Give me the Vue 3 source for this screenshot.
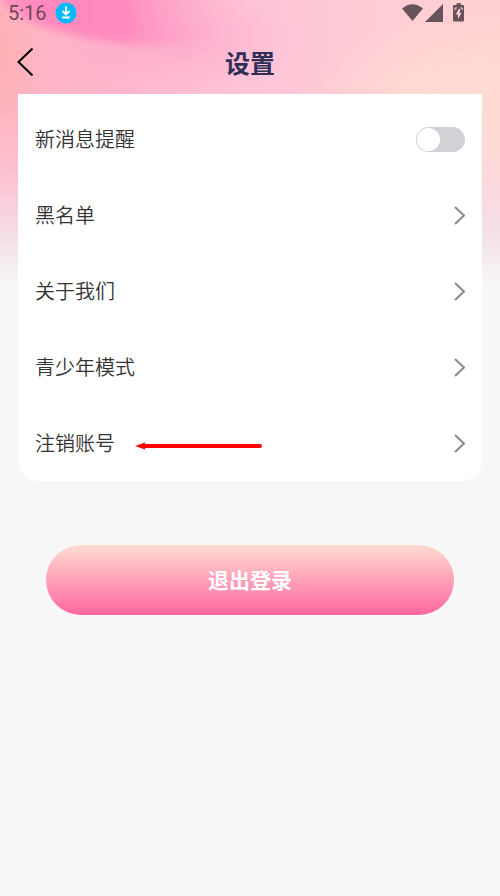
<script setup>
import { ref } from 'vue'

const notify = ref(false)
const links = ['黑名单', '关于我们', '青少年模式', '注销账号']
</script>

<template>
  <div class="screen">
    <svg class="backdrop" viewBox="0 0 500 300" preserveAspectRatio="none" aria-hidden="true">
      <defs>
        <linearGradient id="base" x1="0" y1="0" x2="1" y2="0">
          <stop offset="0" stop-color="#ffb5c4" />
          <stop offset="0.2" stop-color="#fdb5ca" />
          <stop offset="0.5" stop-color="#fec5d9" />
          <stop offset="0.8" stop-color="#ffced4" />
          <stop offset="1" stop-color="#ffd0d2" />
        </linearGradient>
        <linearGradient id="fade" x1="0" y1="0" x2="0" y2="1">
          <stop offset="0.35" stop-color="#f3e4ee" stop-opacity="0" />
          <stop offset="0.55" stop-color="#f3e4ee" stop-opacity="0.2" />
          <stop offset="0.68" stop-color="#f3e4ee" stop-opacity="0.55" />
          <stop offset="0.82" stop-color="#f3e6ee" stop-opacity="0.95" />
          <stop offset="0.95" stop-color="#f7f7f7" />
        </linearGradient>
        <linearGradient id="bloom" gradientUnits="userSpaceOnUse" x1="0" y1="0" x2="250" y2="0">
          <stop offset="0" stop-color="#ff94c0" />
          <stop offset="0.2" stop-color="#ff88bd" />
          <stop offset="0.5" stop-color="#ff88bd" stop-opacity="0.95" />
          <stop offset="0.7" stop-color="#ff9ac5" stop-opacity="0.55" />
          <stop offset="1" stop-color="#ffc0d8" stop-opacity="0" />
        </linearGradient>
        <radialGradient id="peach">
          <stop offset="0" stop-color="#ffdad2" />
          <stop offset="0.5" stop-color="#ffdad2" stop-opacity="0.75" />
          <stop offset="1" stop-color="#ffdad2" stop-opacity="0" />
        </radialGradient>
        <radialGradient id="coral">
          <stop offset="0" stop-color="#ffafb3" />
          <stop offset="1" stop-color="#ffb4b8" stop-opacity="0" />
        </radialGradient>
        <radialGradient id="haze">
          <stop offset="0" stop-color="#ffa0c8" stop-opacity="0.6" />
          <stop offset="1" stop-color="#ffa8cb" stop-opacity="0" />
        </radialGradient>
        <filter id="soft" x="-20%" y="-40%" width="140%" height="180%">
          <feGaussianBlur stdDeviation="4" />
        </filter>
      </defs>
      <rect width="500" height="300" fill="url(#base)" />
      <ellipse cx="480" cy="105" rx="170" ry="90" fill="url(#peach)" />
      <ellipse cx="0" cy="50" rx="50" ry="110" fill="url(#coral)" />
      <ellipse cx="175" cy="38" rx="130" ry="58" fill="url(#haze)" />
      <path d="M-12 -20C0 8 24 22 56 30C88 39 115 44 150 45C190 46 220 38 250 24L250 -20Z" fill="url(#bloom)" filter="url(#soft)" />
      <rect width="500" height="300" fill="url(#fade)" />
    </svg>

    <div class="status">
      <span class="time">5:16</span>
      <svg class="download" viewBox="0 0 22 22" aria-hidden="true">
        <circle cx="11" cy="11" r="10.5" fill="#05b9fb" />
        <path d="M11 4.500V12M7.500 9L11 12.500L14.500 9M7.300 15.500H14.700" fill="none" stroke="#fff" stroke-width="1.8" />
      </svg>
      <svg class="signals" viewBox="0 0 64 22" aria-hidden="true">
        <g fill="#69535a">
          <path d="M0 6.500Q10.500 -2 21 6.500L10.500 19Z" />
          <path d="M23 20L41 2V20Z" />
          <path d="M52 3H54.500V1.300H59V3H61Q62 3 62 4V18.500Q62 19.500 61 19.500H52Q51 19.500 51 18.500V4Q51 3 52 3Z" />
        </g>
        <path d="M56.800 7L53.800 12.500H56V17L59.500 10.800H57.300L58.500 7Z" fill="#ffd5d9" />
        <path d="M53 8V6H55M58.500 6H60.200V8" fill="none" stroke="#ffd5d9" />
      </svg>
    </div>

    <header class="bar">
      <button class="back" type="button" aria-label="返回">
        <svg viewBox="0 0 18 30" aria-hidden="true">
          <path d="M15.500 1.500L1.500 15L15.500 28.500" fill="none" stroke="#000" stroke-width="2" />
        </svg>
      </button>
      <h1>设置</h1>
    </header>

    <main>
      <section class="card">
        <label class="row">
          <span>新消息提醒</span>
          <input v-model="notify" class="toggle" type="checkbox" role="switch" />
        </label>
        <a v-for="(text, i) in links" :key="text" class="row" href="#">
          <span class="name">{{ text }}
            <svg v-if="i === links.length - 1" class="arrow" viewBox="0 0 128 8" aria-hidden="true">
              <path d="M9 4H125" stroke="#f00" stroke-width="4" stroke-linecap="round" />
              <path d="M0 4L10 0.500V7.500Z" fill="#f00" />
            </svg>
          </span>
          <svg class="chevron" viewBox="0 0 12 20" aria-hidden="true">
            <path d="M2 2L11 10.500L2 19" fill="none" stroke="#8a8a8a" stroke-width="2" />
          </svg>
        </a>
      </section>
      <button class="logout" type="button">退出登录</button>
    </main>
  </div>
</template>

<style>
body {
  margin: 0;
  background: #f7f7f7;
}
</style>

<style scoped>
.screen {
  position: relative;
  min-height: 100vh;
  font-family: "Noto Sans CJK SC", sans-serif;
  color: #333;
}
.backdrop {
  position: absolute;
  top: 0;
  left: 0;
  width: 100%;
  height: 300px;
}
.status {
  position: relative;
  display: flex;
  align-items: center;
  height: 26px;
  padding: 0 34px 0 8px;
}
.time {
  font: 400 20px/26px Roboto, sans-serif;
  color: #74445b;
}
.download {
  width: 22px;
  height: 22px;
  margin-left: 8px;
}
.signals {
  width: 64px;
  height: 22px;
  margin-left: auto;
}
.bar {
  position: relative;
  display: grid;
  grid-template-columns: 50px 1fr 50px;
  align-items: center;
  box-sizing: border-box;
  height: 68px;
  padding-top: 4px;
}
.back {
  display: flex;
  padding: 0 0 0 17px;
  border: 0;
  background: none;
}
.back svg {
  width: 18px;
  height: 30px;
}
h1 {
  margin: 0;
  text-align: center;
  font-size: 25px;
  line-height: 36px;
  font-weight: 700;
  color: #2f2f55;
}
main {
  position: relative;
  padding: 0 18px;
}
.card {
  padding-top: 7px;
  background: #fff;
  border-radius: 0 0 20px 20px;
}
.row {
  display: flex;
  align-items: center;
  justify-content: space-between;
  height: 76px;
  padding: 0 17px;
  font-size: 20px;
  font-weight: 350;
  line-height: 28px;
  color: #333;
  text-decoration: none;
}
.name {
  position: relative;
}
.arrow {
  position: absolute;
  left: 100px;
  top: 13px;
  width: 128px;
  height: 8px;
}
.chevron {
  width: 12px;
  height: 20px;
}
.toggle {
  appearance: none;
  display: flex;
  width: 49px;
  height: 25px;
  margin: 0;
  padding: 1px;
  box-sizing: border-box;
  border-radius: 13px;
  background: #d1d1d6;
}
.toggle::before {
  content: "";
  width: 23px;
  height: 23px;
  border-radius: 50%;
  background: #fff;
}
.toggle:checked {
  justify-content: flex-end;
  background: #ff6ba2;
}
.logout {
  display: block;
  width: calc(100% - 56px);
  height: 70px;
  margin: 64px auto 0;
  padding: 0 0 2px;
  border: 0;
  border-radius: 35px;
  background: linear-gradient(#ffdbd1, #ff67a1);
  font: 700 21px/30px "Noto Sans CJK SC", sans-serif;
  color: #fff;
}
</style>
